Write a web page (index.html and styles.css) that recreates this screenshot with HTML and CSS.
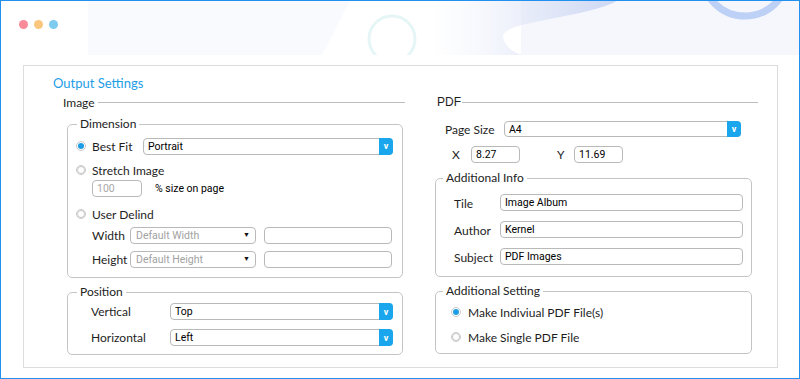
FILE: index.html
```html
<!DOCTYPE html>
<html lang="en">
<head>
    <meta charset="UTF-8">
    <meta name="viewport" content="width=device-width, initial-scale=1.0">
    <link rel="stylesheet" href="styles.css">
</head>
<body>
    <div class="frame">
        <!-- window header with the three dots and the soft artwork behind -->
        <div class="header">
            <svg class="header-art" width="798" height="54" viewBox="0 0 798 54">
                <defs>
                    <linearGradient id="wave" x1="0" y1="0" x2="1" y2="0">
                        <stop offset="0" stop-color="#eef1fb" stop-opacity="0"/>
                        <stop offset="0.75" stop-color="#dbe2f6"/>
                        <stop offset="1" stop-color="#cbd7f4"/>
                    </linearGradient>
                </defs>
                <polygon points="87,0 349,0 321,54 87,54" fill="#f9fafd"/>
                <path d="M520,0 L798,0 L798,54 L520,54 Z" fill="#f5f7fd"/>
                <path d="M430,0 L616,0 C580,18 500,20 502,36 C504,46 512,52 522,54 L430,54 Z" fill="url(#wave)"/>
                <circle cx="391" cy="38" r="23" fill="none" stroke="#e6f5f5" stroke-width="3"/>
                <circle cx="744" cy="-28" r="43" fill="none" stroke="#bdd0f6" stroke-width="7"/>
            </svg>
            <span class="dot dot-red"></span>
            <span class="dot dot-orange"></span>
            <span class="dot dot-blue"></span>
        </div>

        <div class="panel">
            <h1 class="title">Output Settings</h1>
            <div class="columns">
                <!-- left column: image options -->
                <div class="col">
                    <div class="section-head"><span>Image</span><i></i></div>

                    <fieldset class="group group-left">
                        <legend>Dimension</legend>
                        <div class="body dim-body">
                            <div class="row r-best">
                                <span class="radio on"></span>
                                <span class="lbl lbl-best">Best Fit</span>
                                <div class="select">Portrait<b>v</b></div>
                            </div>
                            <div class="row r-stretch">
                                <span class="radio off"></span>
                                <span class="lbl">Stretch Image</span>
                            </div>
                            <div class="row r-pct">
                                <div class="field field-pct">100</div>
                                <span class="pct-note">% size on page</span>
                            </div>
                            <div class="row r-user">
                                <span class="radio off"></span>
                                <span class="lbl">User Delind</span>
                            </div>
                            <div class="row r-size">
                                <span class="lbl lbl-size">Width</span>
                                <div class="dd">Default Width<b>&#9660;</b></div>
                                <div class="field field-size"></div>
                            </div>
                            <div class="row r-size r-height">
                                <span class="lbl lbl-size">Height</span>
                                <div class="dd">Default Height<b>&#9660;</b></div>
                                <div class="field field-size"></div>
                            </div>
                        </div>
                    </fieldset>

                    <fieldset class="group group-left group-pos">
                        <legend>Position</legend>
                        <div class="body pos-body">
                            <div class="row r-pos">
                                <span class="lbl lbl-pos">Vertical</span>
                                <div class="select">Top<b>v</b></div>
                            </div>
                            <div class="row r-pos r-pos2">
                                <span class="lbl lbl-pos">Horizontal</span>
                                <div class="select">Left<b>v</b></div>
                            </div>
                        </div>
                    </fieldset>
                </div>

                <!-- right column: pdf options -->
                <div class="col">
                    <div class="section-head pdf-head"><span>PDF</span><i></i></div>

                    <div class="row r-page">
                        <span class="lbl lbl-page">Page Size</span>
                        <div class="select select-page">A4<b>v</b></div>
                    </div>
                    <div class="row r-xy">
                        <span class="lbl lbl-x">X</span>
                        <div class="field field-xy">8.27</div>
                        <span class="lbl lbl-y">Y</span>
                        <div class="field field-xy">11.69</div>
                    </div>

                    <fieldset class="group group-right">
                        <legend>Additional Info</legend>
                        <div class="body info-body">
                            <div class="row r-info">
                                <span class="lbl lbl-info">Tile</span>
                                <div class="field field-info">Image Album</div>
                            </div>
                            <div class="row r-info">
                                <span class="lbl lbl-info">Author</span>
                                <div class="field field-info">Kernel</div>
                            </div>
                            <div class="row r-info">
                                <span class="lbl lbl-info">Subject</span>
                                <div class="field field-info">PDF Images</div>
                            </div>
                        </div>
                    </fieldset>

                    <fieldset class="group group-right group-set">
                        <legend>Additional Setting</legend>
                        <div class="body set-body">
                            <div class="row r-set">
                                <span class="radio on"></span>
                                <span class="lbl">Make Indiviual PDF File(s)</span>
                            </div>
                            <div class="row r-set r-set2">
                                <span class="radio off"></span>
                                <span class="lbl">Make Single PDF File</span>
                            </div>
                        </div>
                    </fieldset>
                </div>
            </div>
        </div>
    </div>
</body>
</html>
```

FILE: styles.css
```css
* {
    box-sizing: border-box;
    margin: 0;
    padding: 0;
}

body {
    font-family: Lato, "Open Sans", sans-serif;
    color: #1e1e1e;
    background: #fff;
}

.frame {
    width: 800px;
    height: 379px;
    border: 1px solid #2190ee;
    overflow: hidden;
}

/* header */
.header {
    position: relative;
    height: 54px;
    display: flex;
    gap: 6px;
    padding: 19px 0 0 18px;
    overflow: hidden;
}

.header-art {
    position: absolute;
    top: 0;
    left: 0;
}

.dot {
    position: relative;
    width: 9px;
    height: 9px;
    border-radius: 50%;
}

.dot-red { background: #f98a99; }
.dot-orange { background: #fbc67d; }
.dot-blue { background: #7dcbef; }

/* main panel */
.panel {
    width: 755px;
    height: 303px;
    margin: 10px 0 0 22px;
    border: 1px solid #dcdcdc;
    padding: 8px 0 0 39px;
}

.title {
    margin-left: -10px;
    font-size: 13px;
    line-height: 18px;
    font-weight: 400;
    color: #1d9ee6;
}

.columns {
    display: grid;
    grid-template-columns: 342px 321px;
    column-gap: 32px;
    margin-top: 2px;
}

.section-head {
    display: flex;
    align-items: center;
    height: 16px;
    font-size: 12px;
}

.section-head i {
    flex: 1;
    height: 1px;
    margin-left: 3px;
    background: #bcbcbc;
}

.pdf-head span {
    font-family: "Liberation Sans", Arial, sans-serif;
}

.pdf-head i {
    margin-left: 1px;
}

/* fieldsets */
.group {
    border: 1px solid #c4c4c4;
    border-radius: 5px;
    padding: 0;
    margin-top: 6px;
}

.group legend {
    font-size: 12px;
    line-height: 16px;
    padding: 0 3px;
    margin-left: 9px;
    color: #222;
}

.group-left {
    width: 336px;
    margin-left: 4px;
}

.group-right {
    width: 317px;
    margin-left: -2px;
    margin-top: 7px;
}

.group-right legend {
    margin-left: 7px;
}

.group-pos,
.group-set {
    margin-top: 6px;
}

.row {
    display: flex;
    align-items: center;
}

.lbl {
    font-size: 12px;
    white-space: nowrap;
}

/* radios */
.radio {
    width: 10px;
    height: 10px;
    flex: none;
    border: 1px solid #c9c9c9;
    border-radius: 50%;
    display: flex;
    align-items: center;
    justify-content: center;
    margin-right: 6px;
}

.radio::after {
    content: "";
    width: 6px;
    height: 6px;
    border-radius: 50%;
}

.radio.on::after {
    background: #1c9de6;
}

.radio.off::after {
    border: 1px solid #c9c9c9;
}

/* controls */
.select {
    flex: 1;
    height: 17px;
    display: flex;
    align-items: center;
    padding-left: 4px;
    border: 1px solid #b9b9b9;
    border-radius: 4px;
    font-family: Roboto, sans-serif;
    font-size: 10.5px;
    color: #000;
}

.select b {
    margin: -1px -1px -1px auto;
    align-self: stretch;
    width: 14px;
    background: #1aa6ec;
    border-radius: 0 4px 4px 0;
    color: #fff;
    font-size: 9px;
    font-weight: 700;
    display: flex;
    align-items: center;
    justify-content: center;
}

.field {
    height: 17px;
    border: 1px solid #b9b9b9;
    border-radius: 4px;
    display: flex;
    align-items: center;
    padding-left: 4px;
    font-family: Roboto, sans-serif;
    font-size: 10.5px;
    color: #000;
}

.dd {
    width: 126px;
    height: 17px;
    border: 1px solid #b9b9b9;
    border-radius: 4px;
    display: flex;
    align-items: center;
    padding: 0 5px 0 5px;
    font-family: Roboto, sans-serif;
    font-size: 10.5px;
    color: #a2a2a2;
}

.dd b {
    margin-left: auto;
    font-size: 7px;
    color: #111;
}

/* dimension box */
.dim-body {
    padding: 2px 9px 9px 8px;
}

.r-best { height: 24px; }
.lbl-best { width: 51px; }

.r-stretch { height: 18px; margin-top: 3px; }

.r-pct { height: 18px; padding-left: 16px; }

.field-pct {
    width: 50px;
    color: #a8a8a8;
}

.pct-note {
    margin-left: 13px;
    font-family: Roboto, sans-serif;
    font-size: 10.5px;
    color: #000;
}

.r-user { height: 20px; margin-top: 7px; }

.r-size { height: 18px; margin-top: 2px; padding-left: 16px; }
.r-height { margin-top: 6px; }
.lbl-size { width: 38px; }

.field-size {
    width: 128px;
    margin-left: 8px;
}

/* position box */
.pos-body {
    padding: 3px 9px 8px 23px;
}

.lbl-pos { width: 79px; }
.r-pos2 { margin-top: 9px; }

/* pdf column */
.r-page {
    height: 16px;
    margin-top: 11px;
    padding-left: 8px;
}

.lbl-page { width: 59px; }

.select-page {
    flex: none;
    width: 237px;
    height: 16px;
}

.r-xy {
    height: 17px;
    margin-top: 9px;
    padding-left: 15px;
}

.lbl-x { width: 19px; }
.lbl-y { width: 17px; margin-left: 37px; }
.field-xy { width: 49px; }

.info-body {
    padding: 8px 8px 11px 18px;
}

.r-info + .r-info { margin-top: 10px; }
.lbl-info { width: 46px; padding-top: 2px; }
.field-info { flex: 1; }

.set-body {
    padding: 3px 8px 6px 15px;
}

.r-set { height: 20px; }
.r-set .radio { margin-right: 7px; }
.r-set2 { margin-top: 5px; }
```
